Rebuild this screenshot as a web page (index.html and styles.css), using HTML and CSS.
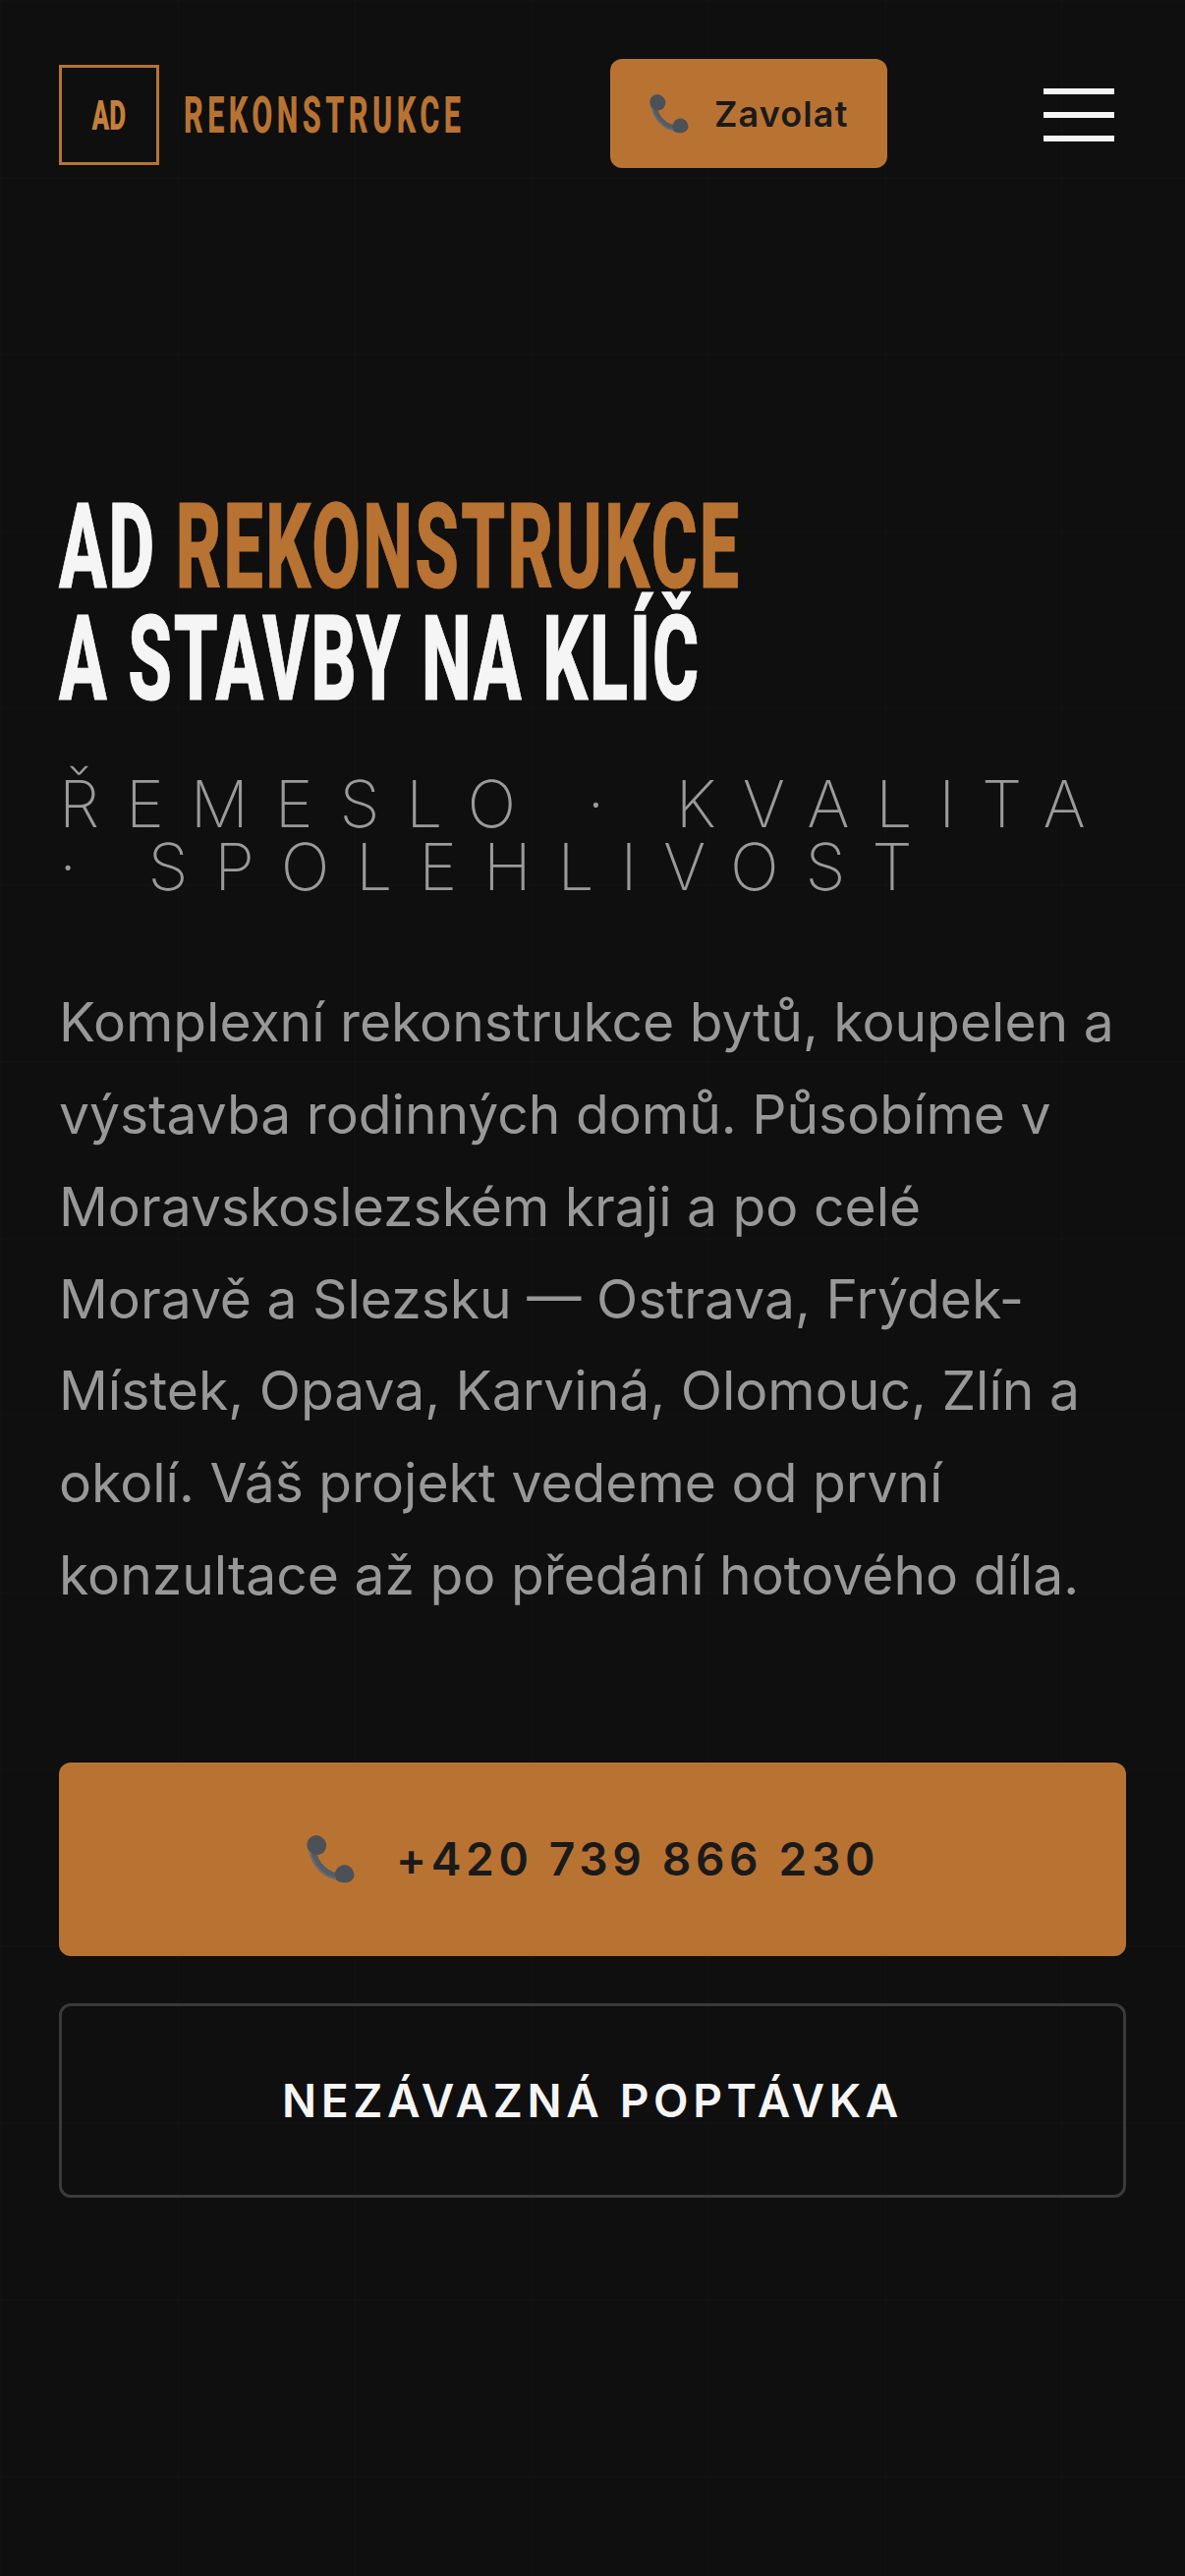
FILE: index.html
```html
<!DOCTYPE html>
<html lang="cs">
<head>
<meta charset="utf-8">
<title>AD Rekonstrukce</title>
<link rel="stylesheet" href="styles.css">
</head>
<body>
<svg class="defs" width="0" height="0" aria-hidden="true">
  <defs>
    <symbol id="phone" viewBox="0 0 50 50">
      <path fill="none" stroke="#565c62" stroke-width="7" d="M7 16C9 30 21 43 36 43"/>
      <path fill="#4b5157" d="M1 10C1 4 6 0 11 0c5 1 10 5 10 10 0 3-1 6-3 8-3 2-7 3-11 2C3 18 1 14 1 10Z"/>
      <path fill="#4b5157" d="M32 35c2-3 6-5 10-4 5 1 8 6 8 11-1 5-6 8-12 7-4 0-7-2-8-5-1-3 0-6 2-9Z"/>
      <path fill="none" stroke="#666c72" stroke-width="2" d="M4 17c2 12 14 27 27 28"/>
    </symbol>
  </defs>
</svg>
<div class="page">
  <header class="topbar">
    <a class="brand">
      <span class="brand-box"><span class="brand-ad">AD</span></span>
      <span class="brand-name">REKONSTRUKCE</span>
    </a>
    <a class="call"><svg class="call-ico"><use href="#phone"/></svg><span>Zavolat</span></a>
    <div class="burger"><i></i><i></i><i></i></div>
  </header>
  <main class="hero">
    <h1 class="title"><span class="title-line">AD <em>REKONSTRUKCE</em></span><span class="title-line">A STAVBY NA KLÍČ</span></h1>
    <p class="sub">ŘEMESLO · KVALITA · SPOLEHLIVOST</p>
    <p class="lead">Komplexní rekonstrukce bytů, koupelen a výstavba rodinných domů. Působíme v Moravskoslezském kraji a po celé Moravě a Slezsku — Ostrava, Frýdek-Místek, Opava, Karviná, Olomouc, Zlín a okolí. Váš projekt vedeme od první konzultace až po předání hotového díla.</p>
    <div class="actions">
      <a class="btn btn-primary"><svg class="btn-ico"><use href="#phone"/></svg><span>+420 739 866 230</span></a>
      <a class="btn btn-ghost">NEZÁVAZNÁ POPTÁVKA</a>
    </div>
  </main>
</div>
</body>
</html>
```
FILE: styles.css
```css
* { box-sizing: border-box; }
html, body { margin: 0; padding: 0; }
body {
  background-color: #0f0f0f;
  background-image:
    linear-gradient(rgba(255,255,255,.008) 2px, transparent 2px),
    linear-gradient(90deg, rgba(255,255,255,.008) 2px, transparent 2px);
  background-size: 180px 180px;
  color: #f5f5f5;
  font-family: Inter, "Liberation Sans", sans-serif;
}
.defs { position: absolute; }
.page { width: 1206px; height: 2622px; overflow: hidden; }
.topbar {
  display: flex;
  align-items: center;
  padding: 60px 72px 0 60px;
}
.brand { display: flex; align-items: center; gap: 25px; width: 561px; flex: none; }
.brand-box {
  flex: none;
  width: 102px; height: 102px;
  border: 3px solid #b87333;
  display: flex; align-items: center; justify-content: center;
}
.brand-ad {
  color: #c47f3a;
  font-family: Roboto, sans-serif;
  font-weight: 900;
  font-size: 42px;
  transform: scaleX(.62);
}
.brand-name {
  color: #b87333;
  font-family: Roboto, sans-serif;
  font-weight: 800;
  font-size: 51px;
  letter-spacing: 7.4px;
  white-space: nowrap;
  transform: scaleX(.6);
  transform-origin: left center;
}
.call {
  flex: none;
  width: 282px; height: 111px;
  margin-bottom: 3px;
  background: #b87333;
  border-radius: 12px;
  display: flex; align-items: center; gap: 26px;
  padding-left: 39px;
  color: #1a1a1a;
  font-size: 36px;
  font-weight: 600;
  letter-spacing: 1.1px;
}
.call-ico { width: 41px; height: 40px; flex: none; }
.burger { display: flex; flex-direction: column; gap: 18px; width: 72px; flex: none; margin-left: auto; }
.burger i { display: block; height: 6px; background: #f5f5f5; }
.hero { padding: 0 60px; margin-top: 326px; }
.title {
  margin: 0;
  font-family: Roboto, sans-serif;
  font-weight: 800;
  font-size: 120px;
  line-height: 114px;
}
.title-line {
  display: block;
  white-space: nowrap;
  letter-spacing: 3px;
  transform: scaleX(.6);
  transform-origin: left center;
  -webkit-text-stroke: 1px currentColor;
}
.title em { font-style: normal; color: #b87333; letter-spacing: 3.8px; }
.sub {
  margin: 58px 0 0;
  color: #9a9a9a;
  font-size: 66px;
  font-weight: 200;
  line-height: 64px;
  letter-spacing: 26.8px;
}
.lead {
  margin: 80px 0 0;
  color: #989898;
  font-size: 55.2px;
  font-weight: 400;
  line-height: 93.84px;
}
.actions { margin-top: 143px; display: flex; flex-direction: column; gap: 48px; }
.btn {
  height: 197px;
  border-radius: 12px;
  display: flex; align-items: center; justify-content: center;
  font-weight: 600;
  font-size: 46.2px;
  letter-spacing: 4.62px;
}
.btn-primary { background: #b87333; color: #1a1a1a; gap: 42px; }
.btn-ico { width: 50px; height: 49px; flex: none; }
.btn-ghost { height: 198px; border: 3px solid #3a3a3a; color: #f5f5f5; }
```
